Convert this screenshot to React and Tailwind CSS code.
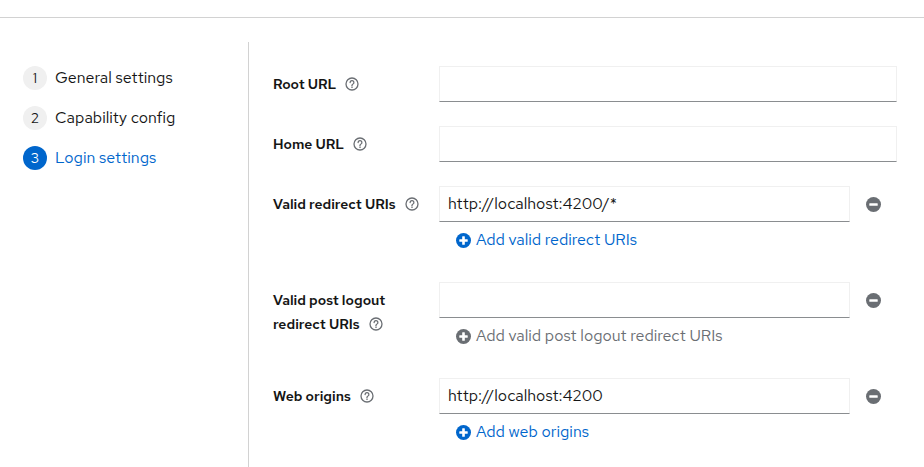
import React from 'react';

const steps = [
  { n: 1, label: 'General settings' },
  { n: 2, label: 'Capability config' },
  { n: 3, label: 'Login settings', active: true },
];

function HelpIcon() {
  return (
    <svg width="14" height="14" viewBox="0 0 14 14" className="shrink-0">
      <circle cx="7" cy="7" r="6" fill="none" stroke="#6a6e73" strokeWidth="1.3" />
      <path d="M5.1 5.5a1.9 1.9 0 1 1 2.6 1.75c-.45.2-.7.5-.7 1v.45" fill="none" stroke="#6a6e73" strokeWidth="1.3" strokeLinecap="round" />
      <circle cx="7" cy="10.2" r=".8" fill="#6a6e73" />
    </svg>
  );
}

function MinusIcon() {
  return (
    <svg width="15" height="15" viewBox="0 0 16 16">
      <circle cx="8" cy="8" r="8" fill="#6a6e73" />
      <rect x="3.5" y="6.6" width="9" height="2.8" rx=".6" fill="#fff" />
    </svg>
  );
}

function PlusIcon({ color }) {
  return (
    <svg width="15" height="15" viewBox="0 0 16 16">
      <circle cx="8" cy="8" r="8" fill={color} />
      <rect x="3.5" y="6.6" width="9" height="2.8" rx=".6" fill="#fff" />
      <rect x="6.6" y="3.5" width="2.8" height="9" rx=".6" fill="#fff" />
    </svg>
  );
}

function Label({ children }) {
  return (
    <div className="w-[166px] shrink-0 pt-[6px] text-[14px] leading-6 font-semibold text-[#151515]">
      {children}
    </div>
  );
}

function TextInput({ value }) {
  return (
    <div className="h-9 flex-1 flex items-center px-2 border border-[#f0f0f0] border-b-[#8a8d90] text-[16px] text-[#151515]">
      {value}
    </div>
  );
}

function SimpleRow({ label, value }) {
  return (
    <div className="flex">
      <Label>
        <span className="inline-flex items-center gap-[9px]">
          {label} <HelpIcon />
        </span>
      </Label>
      <TextInput value={value} />
    </div>
  );
}

function MultiRow({ label, value, add, disabled }) {
  const color = disabled ? '#6a6e73' : '#0066cc';
  return (
    <div className="flex">
      <Label>{label}</Label>
      <div className="flex-1">
        <div className="flex items-center">
          <TextInput value={value} />
          <div className="w-[47px] flex justify-center">
            <MinusIcon />
          </div>
        </div>
        <div className="h-9 pl-[17px] pt-2">
          <div className="flex items-center gap-[5px] h-5 text-[16px]" style={{ color }}>
            <PlusIcon color={color} />
            <span>{add}</span>
          </div>
        </div>
      </div>
    </div>
  );
}

export default function App() {
  return (
    <div className="w-[924px] h-[467px] bg-white overflow-hidden font-['Red_Hat_Text','Liberation_Sans',sans-serif]">
      <div className="h-[18px] border-b border-[#d2d2d2]" />
      <div className="flex mt-6 h-[425px]">
        <nav className="w-[249px] border-r border-[#d2d2d2] pt-6 pl-[23px] flex flex-col gap-4">
          {steps.map((s) => (
            <div key={s.n} className="flex items-center gap-2 h-6">
              <div
                className={`w-6 h-6 rounded-full flex items-center justify-center text-[14px] ${
                  s.active ? 'bg-[#0066cc] text-white' : 'bg-[#f0f0f0] text-[#151515]'
                }`}
              >
                {s.n}
              </div>
              <span className={`text-[16px] ${s.active ? 'text-[#0066cc]' : 'text-[#151515]'}`}>{s.label}</span>
            </div>
          ))}
        </nav>
        <div className="flex-1 pt-6 pl-6 pr-[27px] flex flex-col gap-6">
          <SimpleRow label="Root URL" />
          <SimpleRow label="Home URL" />
          <MultiRow
            label={
              <span className="inline-flex items-center gap-[9px]">
                Valid redirect URIs <HelpIcon />
              </span>
            }
            value="http://localhost:4200/*"
            add="Add valid redirect URIs"
          />
          <MultiRow
            label={
              <>
                Valid post logout
                <br />
                <span className="inline-flex items-center gap-[9px]">
                  redirect URIs <HelpIcon />
                </span>
              </>
            }
            add="Add valid post logout redirect URIs"
            disabled
          />
          <MultiRow
            label={
              <span className="inline-flex items-center gap-[9px]">
                Web origins <HelpIcon />
              </span>
            }
            value="http://localhost:4200"
            add="Add web origins"
          />
        </div>
      </div>
    </div>
  );
}
